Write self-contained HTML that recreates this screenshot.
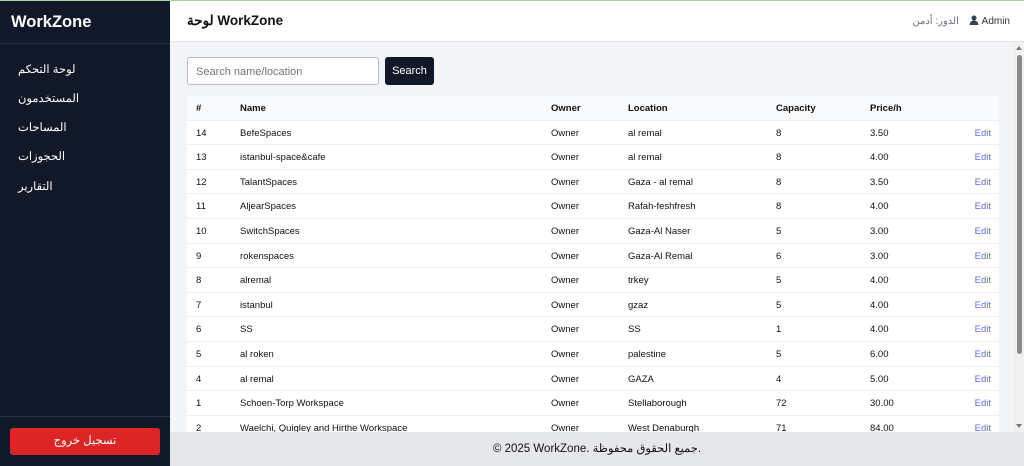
<!DOCTYPE html>
<html><head><meta charset="utf-8"><style>
*{box-sizing:border-box;margin:0;padding:0}
body{width:1024px;height:466px;overflow:hidden;font-family:"Liberation Sans","Noto Sans CJK SC",sans-serif;background:#f3f4f6;position:relative}
.topline{position:absolute;top:0;left:0;width:1024px;height:1px;background:#a7d3a1;z-index:5}
.side{position:absolute;left:0;top:0;width:170px;height:466px;background:#111827;color:#fff}
.side h1{font-size:16.5px;font-weight:bold;position:absolute;left:11px;top:13px}
.side .b1{position:absolute;top:43px;left:0;width:170px;height:1px;background:#263041}
.side .b2{position:absolute;top:416px;left:0;width:170px;height:1px;background:#263041}
.side .it{position:absolute;left:18px;font-size:11.5px}
.logout{position:absolute;left:10px;top:428px;width:150px;height:27px;background:#dc2626;border-radius:3px;color:#fff;font-size:11.5px;text-align:center;line-height:27px}
.head{position:absolute;left:170px;top:1px;width:854px;height:41px;background:#fff;border-bottom:1px solid #e2e4e8}
.head .t{position:absolute;left:17px;top:12px;font-size:13.5px;font-weight:bold;color:#111}
.head .r{position:absolute;right:14px;top:14px;font-size:10px;color:#333}
.head .r span.role{color:#6b7280;margin-right:10px}
.inp{position:absolute;left:187px;top:57px;width:192px;height:28px;border:1px solid #b8bcc4;border-radius:3px;background:#fff;font-size:11px;color:#757575;padding:8px 8px}
.btn{position:absolute;left:385px;top:57px;width:49px;height:28px;background:#111827;border-radius:3px;color:#fff;font-size:11px;text-align:center;line-height:28px}
.tbl{position:absolute;left:187px;top:96px;width:812px;background:#fff}
.row{height:24.6px;border-bottom:1px solid #eef0f2;position:relative;font-size:9.5px;color:#111}
.row span{position:absolute;top:7px}
.hd{background:#f9fafb;font-weight:bold}
.e{color:#6366f1;right:8px}
.foot{position:absolute;left:170px;top:432px;width:854px;height:34px;background:#e5e7eb;font-size:11.5px;text-align:center;line-height:34px;color:#111}
.sb{position:absolute;left:1014px;top:42px;width:10px;height:390px;background:#f1f1f1}
.thumb{position:absolute;left:3px;top:13px;width:5px;height:299px;background:#8a8a8a;border-radius:3px}
.ar{position:absolute;left:2px;width:0;height:0;border-left:3px solid transparent;border-right:3px solid transparent}
</style></head><body>
<div class="topline"></div>
<div class="side">
<h1>WorkZone</h1><div class="b1"></div>
<div class="it" style="top:62px">لوحة التحكم</div>
<div class="it" style="top:91px">المستخدمون</div>
<div class="it" style="top:120px">المساحات</div>
<div class="it" style="top:149px">الحجوزات</div>
<div class="it" style="top:179px">التقارير</div>
<div class="b2"></div>
<div class="logout">تسجيل خروج</div>
</div>
<div class="head"><div class="t">لوحة WorkZone</div>
<div class="r"><span class="role">الدور: أدمن</span><svg width="10" height="10" viewBox="0 0 10 10" style="vertical-align:-1px"><circle cx="5" cy="3" r="2.5" fill="#374151"/><path d="M0.5 10 Q1 5.5 5 5.5 Q9 5.5 9.5 10Z" fill="#374151"/></svg> Admin</div></div>
<div class="inp">Search name/location</div>
<div class="btn">Search</div>
<div class="tbl">
<div class="row hd"><span style="left:9px">#</span><span style="left:53px">Name</span><span style="left:364px">Owner</span><span style="left:441px">Location</span><span style="left:589px">Capacity</span><span style="left:683px">Price/h</span></div>
<div class="row"><span style="left:9px">14</span><span style="left:53px">BefeSpaces</span><span style="left:364px">Owner</span><span style="left:441px">al remal</span><span style="left:589px">8</span><span style="left:683px">3.50</span><span class="e">Edit</span></div>
<div class="row"><span style="left:9px">13</span><span style="left:53px">istanbul-space&amp;cafe</span><span style="left:364px">Owner</span><span style="left:441px">al remal</span><span style="left:589px">8</span><span style="left:683px">4.00</span><span class="e">Edit</span></div>
<div class="row"><span style="left:9px">12</span><span style="left:53px">TalantSpaces</span><span style="left:364px">Owner</span><span style="left:441px">Gaza - al remal</span><span style="left:589px">8</span><span style="left:683px">3.50</span><span class="e">Edit</span></div>
<div class="row"><span style="left:9px">11</span><span style="left:53px">AljearSpaces</span><span style="left:364px">Owner</span><span style="left:441px">Rafah-feshfresh</span><span style="left:589px">8</span><span style="left:683px">4.00</span><span class="e">Edit</span></div>
<div class="row"><span style="left:9px">10</span><span style="left:53px">SwitchSpaces</span><span style="left:364px">Owner</span><span style="left:441px">Gaza-Al Naser</span><span style="left:589px">5</span><span style="left:683px">3.00</span><span class="e">Edit</span></div>
<div class="row"><span style="left:9px">9</span><span style="left:53px">rokenspaces</span><span style="left:364px">Owner</span><span style="left:441px">Gaza-Al Remal</span><span style="left:589px">6</span><span style="left:683px">3.00</span><span class="e">Edit</span></div>
<div class="row"><span style="left:9px">8</span><span style="left:53px">alremal</span><span style="left:364px">Owner</span><span style="left:441px">trkey</span><span style="left:589px">5</span><span style="left:683px">4.00</span><span class="e">Edit</span></div>
<div class="row"><span style="left:9px">7</span><span style="left:53px">istanbul</span><span style="left:364px">Owner</span><span style="left:441px">gzaz</span><span style="left:589px">5</span><span style="left:683px">4.00</span><span class="e">Edit</span></div>
<div class="row"><span style="left:9px">6</span><span style="left:53px">SS</span><span style="left:364px">Owner</span><span style="left:441px">SS</span><span style="left:589px">1</span><span style="left:683px">4.00</span><span class="e">Edit</span></div>
<div class="row"><span style="left:9px">5</span><span style="left:53px">al roken</span><span style="left:364px">Owner</span><span style="left:441px">palestine</span><span style="left:589px">5</span><span style="left:683px">6.00</span><span class="e">Edit</span></div>
<div class="row"><span style="left:9px">4</span><span style="left:53px">al remal</span><span style="left:364px">Owner</span><span style="left:441px">GAZA</span><span style="left:589px">4</span><span style="left:683px">5.00</span><span class="e">Edit</span></div>
<div class="row"><span style="left:9px">1</span><span style="left:53px">Schoen-Torp Workspace</span><span style="left:364px">Owner</span><span style="left:441px">Stellaborough</span><span style="left:589px">72</span><span style="left:683px">30.00</span><span class="e">Edit</span></div>
<div class="row"><span style="left:9px">2</span><span style="left:53px">Waelchi, Quigley and Hirthe Workspace</span><span style="left:364px">Owner</span><span style="left:441px">West Denaburgh</span><span style="left:589px">71</span><span style="left:683px">84.00</span><span class="e">Edit</span></div>
</div>
<div class="sb"><div class="ar" style="top:4px;border-bottom:4px solid #777"></div><div class="thumb"></div><div class="ar" style="top:382px;border-top:4px solid #777"></div></div>
<div class="foot">© 2025 WorkZone. جميع الحقوق محفوظة.</div>
</body></html>
